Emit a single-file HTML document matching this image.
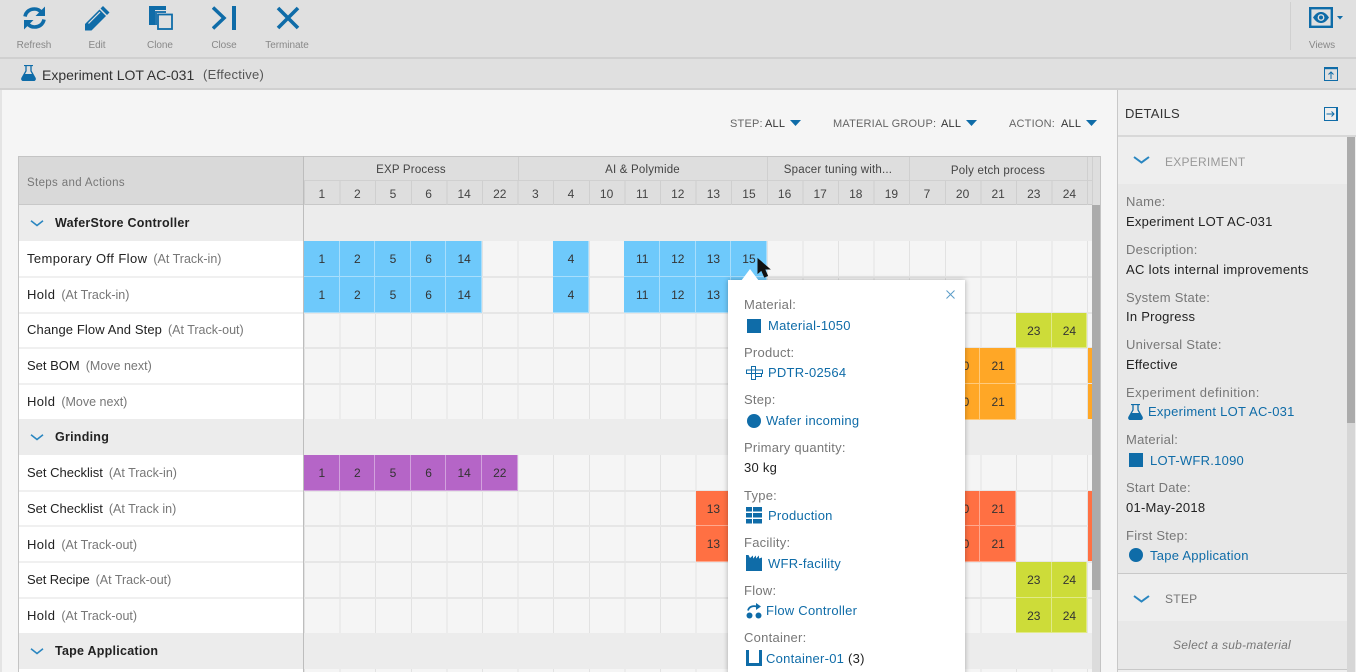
<!DOCTYPE html>
<html><head><meta charset="utf-8"><style>
html,body{margin:0;padding:0;width:1356px;height:672px;overflow:hidden;background:#f5f5f5}
body{font-family:"Liberation Sans",sans-serif;position:relative;color:#333}
.a{position:absolute}
.t{position:absolute;white-space:nowrap;line-height:20px;font-size:13px;letter-spacing:.25px;transform:translateY(1px)}
.g{color:#777}.l{color:#0f6ca8}.d{color:#222}
.tb{font-size:10px;color:#888;letter-spacing:-.05px;text-align:center;width:70px}
.c{position:absolute;width:35.6px;height:35.6px;text-align:center;line-height:36px;font-size:12px;color:#333;box-shadow:inset -1px -1px 0 rgba(255,255,255,.4)}
.bl{background:#6ec9fb}.pu{background:#b565c7}.re{background:#ff7043}.or{background:#ffa726}.li{background:#cddc39}
.x0{left:304px}.x1{left:339.6px}.x2{left:375.2px}.x3{left:410.8px}.x4{left:446.4px}.x5{left:482px}.x7{left:553.2px}.x9{left:624.4px}.x10{left:660px}.x11{left:695.6px}.x12{left:731.2px}.x18{left:944.8px}.x19{left:980.4px}.x20{left:1016px}.x21{left:1051.6px}
.r1{top:241px}.r2{top:277px}.r3{top:312.5px}.r4{top:348px}.r5{top:384px}.r6{top:455px}.r7{top:490.5px}.r8{top:526px}.r9{top:562px}.r10{top:597.5px}
.hn{position:absolute;top:183.5px;width:35.6px;text-align:center;font-size:12px;line-height:20px;color:#444}
.hg{position:absolute;top:160px;text-align:center;font-size:11.5px;line-height:20px;color:#444;letter-spacing:.2px;white-space:nowrap}
.rl{left:27px;font-size:13px;letter-spacing:.1px;color:#222}.rl span{color:#777;margin-left:6px;font-size:12.5px;letter-spacing:0}
.gl{left:55px;font-weight:700;font-size:12.5px;color:#222}
.ex{position:absolute;left:1087.5px;width:4.5px;height:35px}
.f{font-size:11px;letter-spacing:.2px;color:#666}
svg{position:absolute;display:block}
</style></head><body>

<!-- toolbar -->
<div class="a" style="left:0;top:0;width:1356px;height:57px;background:#e0e0e0"></div>
<div class="a" style="left:0;top:57px;width:1356px;height:2px;background:#d0d0d0"></div>
<div class="a" style="left:0;top:59px;width:1356px;height:29px;background:#e0e0e0"></div>
<div class="a" style="left:0;top:88px;width:1356px;height:2px;background:#d0d0d0"></div>
<div class="a" style="left:0;top:90px;width:2px;height:582px;background:#e4e4e4"></div>

<svg style="left:22px;top:5px" width="25" height="26" viewBox="0 0 25 26" fill="none" stroke="#0f6ca8" stroke-width="3.6"><path d="M3 11.500C4 6.500 8 4 12.500 4c3 0 5.500 1.500 7 3.500"/><path d="M22 14.500C21 19.500 17 22 12.500 22c-3 0-5.500-1.500-7-3.500"/><path d="M23 1.500v9.500h-9.500z" fill="#0f6ca8" stroke="none"/><path d="M2 24.500v-9.500h9.500z" fill="#0f6ca8" stroke="none"/></svg>
<svg style="left:85px;top:6px" width="25" height="25" viewBox="0 0 25 25"><path d="M0 24.500V18L14.500 3.500l6.500 6.500L6.500 24.500z" fill="#0f6ca8"/><path d="M15.500 2.500L18 0l6.500 6.500L22 9z" fill="#0f6ca8"/><path d="M3.500 17.500L15 6" stroke="#e0e0e0" stroke-width="1.200"/></svg>
<svg style="left:148px;top:5px" width="26" height="26" viewBox="0 0 26 26"><path d="M1 1h17v4H7v15H1z" fill="#0f6ca8"/><path d="M7 6h11v2H9v12H7z" fill="#0f6ca8" opacity=".9"/><rect x="10" y="9.500" width="14" height="14.500" fill="none" stroke="#0f6ca8" stroke-width="1.800"/></svg>
<svg style="left:212px;top:5px" width="26" height="26" viewBox="0 0 26 26"><path d="M1 2.500L12 13 1 23.500" fill="none" stroke="#0f6ca8" stroke-width="3.500"/><rect x="20" y="1" width="4" height="24" fill="#0f6ca8"/></svg>
<svg style="left:276px;top:6px" width="24" height="24" viewBox="0 0 24 24"><path d="M2 2l20 20M22 2L2 22" stroke="#0f6ca8" stroke-width="3.600" fill="none"/></svg>

<div class="t tb" style="left:-1px;top:35px">Refresh</div>
<div class="t tb" style="left:62px;top:35px">Edit</div>
<div class="t tb" style="left:125px;top:35px">Clone</div>
<div class="t tb" style="left:189px;top:35px">Close</div>
<div class="t tb" style="left:252px;top:35px">Terminate</div>

<div class="a" style="left:1290px;top:2px;width:1px;height:48px;background:#d0d0d0"></div>
<svg style="left:1309px;top:7px" width="35" height="21" viewBox="0 0 35 21"><rect x="1.200" y="1.200" width="21.600" height="18.600" fill="none" stroke="#0f6ca8" stroke-width="2.400"/><path d="M4 10.500C7 6 9.500 5 12 5s5 1 8 5.500C17 15 14.500 16 12 16s-5-1-8-5.500z" fill="#0f6ca8"/><circle cx="12" cy="10.500" r="3.400" fill="#e0e0e0"/><circle cx="12" cy="10.500" r="2" fill="#0f6ca8"/><path d="M28 9h6l-3 3.500z" fill="#0f6ca8"/></svg>
<div class="t tb" style="left:1287px;top:35px">Views</div>

<!-- title -->
<svg style="left:21px;top:65px" width="15" height="16" viewBox="0 0 15 16"><path d="M3 .5h9M5 1v5L1 13c-.6 1.500.2 2.500 1.500 2.500h10c1.300 0 2.100-1 1.500-2.500L10 6V1" fill="none" stroke="#0f6ca8" stroke-width="1.300"/><path d="M3.500 9h8l3 5.500-1 1.200h-12l-1-1.200z" fill="#0f6ca8"/></svg>
<div class="t" style="left:42px;top:64px;font-size:14px;color:#333;letter-spacing:0">Experiment LOT AC-031</div>
<div class="t" style="left:203px;top:64px;font-size:13px;color:#555;letter-spacing:.25px">(Effective)</div>
<svg style="left:1324px;top:67px" width="14" height="14" viewBox="0 0 14 14"><rect x=".5" y=".5" width="13" height="13" fill="none" stroke="#0f6ca8"/><rect x="0" y="0" width="14" height="2.200" fill="#0f6ca8"/><path d="M7 12V5M4.500 7.500L7 5l2.500 2.500" fill="none" stroke="#0f6ca8" stroke-width="1"/></svg>

<!-- filters -->
<div class="t f" style="left:730px;top:113px">STEP:</div>
<div class="t f" style="left:765px;top:113px;color:#333">ALL</div>
<svg style="left:790px;top:120px" width="11" height="6"><path d="M0 0h11L5.500 6z" fill="#0f6ca8"/></svg>
<div class="t f" style="left:833px;top:113px">MATERIAL GROUP:</div>
<div class="t f" style="left:941px;top:113px;color:#333">ALL</div>
<svg style="left:966px;top:120px" width="11" height="6"><path d="M0 0h11L5.500 6z" fill="#0f6ca8"/></svg>
<div class="t f" style="left:1009px;top:113px">ACTION:</div>
<div class="t f" style="left:1061px;top:113px;color:#333">ALL</div>
<svg style="left:1086px;top:120px" width="11" height="6"><path d="M0 0h11L5.500 6z" fill="#0f6ca8"/></svg>

<!-- table frame -->
<div class="a" style="left:18px;top:156px;width:1082px;height:516px;background:#f5f5f5"></div>
<div class="a" style="left:304px;top:205px;width:788px;height:467px;background-image:repeating-linear-gradient(90deg,#e2e2e2 0,#e2e2e2 1px,transparent 1px,transparent 35.6px)"></div>
<div class="a" style="left:304px;top:276px;width:788px;height:1.500px;background:#e6e6e6"></div>
<div class="a" style="left:304px;top:312px;width:788px;height:1.500px;background:#e6e6e6"></div>
<div class="a" style="left:304px;top:347px;width:788px;height:1.500px;background:#e6e6e6"></div>
<div class="a" style="left:304px;top:383px;width:788px;height:1.500px;background:#e6e6e6"></div>
<div class="a" style="left:304px;top:490px;width:788px;height:1.500px;background:#e6e6e6"></div>
<div class="a" style="left:304px;top:525px;width:788px;height:1.500px;background:#e6e6e6"></div>
<div class="a" style="left:304px;top:561px;width:788px;height:1.500px;background:#e6e6e6"></div>
<div class="a" style="left:304px;top:597px;width:788px;height:1.500px;background:#e6e6e6"></div>

<!-- header -->
<div class="a" style="left:18px;top:156px;width:1082px;height:49px;background:#dedede;border-top:1px solid #c4c4c4;box-sizing:border-box"></div>
<div class="a" style="left:18px;top:156px;width:286px;height:49px;background:#d9d9d9;border-top:1px solid #c4c4c4;box-sizing:border-box"></div>
<div class="a" style="left:18px;top:204px;width:1074px;height:1px;background:#c8c8c8"></div>
<div class="a" style="left:304px;top:180px;width:788px;height:1px;background:#d0d0d0"></div>
<div class="a" style="left:304px;top:181px;width:788px;height:24px;background-image:repeating-linear-gradient(90deg,#cfcfcf 0,#cfcfcf 1px,transparent 1px,transparent 35.6px)"></div>
<div class="a" style="left:518px;top:157px;width:1px;height:24px;background:#cfcfcf"></div>
<div class="a" style="left:767px;top:157px;width:1px;height:24px;background:#cfcfcf"></div>
<div class="a" style="left:909px;top:157px;width:1px;height:24px;background:#cfcfcf"></div>
<div class="a" style="left:1087px;top:157px;width:1px;height:48px;background:#cfcfcf"></div>
<div class="a" style="left:1092px;top:157px;width:1px;height:48px;background:#cfcfcf"></div>
<div class="t g" style="left:27px;top:172px;font-size:11.5px;letter-spacing:.35px">Steps and Actions</div>
<div class="hg" style="left:304px;width:214px">EXP Process</div>
<div class="hg" style="left:518px;width:249px">AI &amp; Polymide</div>
<div class="hg" style="left:767px;width:142px">Spacer tuning with...</div>
<div class="hg" style="left:909px;width:178px;top:161px">Poly etch process</div>

<div class="hn" style="left:304px">1</div><div class="hn" style="left:339.6px">2</div><div class="hn" style="left:375.2px">5</div><div class="hn" style="left:410.8px">6</div><div class="hn" style="left:446.4px">14</div><div class="hn" style="left:482px">22</div><div class="hn" style="left:517.6px">3</div><div class="hn" style="left:553.2px">4</div><div class="hn" style="left:588.8px">10</div><div class="hn" style="left:624.4px">11</div><div class="hn" style="left:660px">12</div><div class="hn" style="left:695.6px">13</div><div class="hn" style="left:731.2px">15</div><div class="hn" style="left:766.8px">16</div><div class="hn" style="left:802.4px">17</div><div class="hn" style="left:838px">18</div><div class="hn" style="left:873.6px">19</div><div class="hn" style="left:909.2px">7</div><div class="hn" style="left:944.8px">20</div><div class="hn" style="left:980.4px">21</div><div class="hn" style="left:1016px">23</div><div class="hn" style="left:1051.6px">24</div>

<!-- group rows -->
<div class="a" style="left:18px;top:205px;width:1074px;height:36px;background:#ececec"></div>
<div class="a" style="left:18px;top:419px;width:1074px;height:36px;background:#ececec"></div>
<div class="a" style="left:18px;top:633px;width:1074px;height:36px;background:#ececec"></div>

<!-- white left rows -->
<div class="a" style="left:19px;top:241px;width:285px;height:178px;background:#fff"></div>
<div class="a" style="left:19px;top:455px;width:285px;height:178px;background:#fff"></div>
<div class="a" style="left:19px;top:669px;width:285px;height:3px;background:#fff"></div>
<div class="a" style="left:19px;top:276px;width:285px;height:1.500px;background:#f0f0f0"></div>
<div class="a" style="left:19px;top:312px;width:285px;height:1.500px;background:#f0f0f0"></div>
<div class="a" style="left:19px;top:347px;width:285px;height:1.500px;background:#f0f0f0"></div>
<div class="a" style="left:19px;top:383px;width:285px;height:1.500px;background:#f0f0f0"></div>
<div class="a" style="left:19px;top:490px;width:285px;height:1.500px;background:#f0f0f0"></div>
<div class="a" style="left:19px;top:525px;width:285px;height:1.500px;background:#f0f0f0"></div>
<div class="a" style="left:19px;top:561px;width:285px;height:1.500px;background:#f0f0f0"></div>
<div class="a" style="left:19px;top:597px;width:285px;height:1.500px;background:#f0f0f0"></div>
<div class="a" style="left:18px;top:156px;width:1px;height:516px;background:#c4c4c4"></div>
<div class="a" style="left:303px;top:156px;width:1px;height:516px;background:#bdbdbd"></div>

<!-- labels -->
<svg style="left:30px;top:220px" width="14" height="7"><path d="M1 .8L7 5.500 13 .8" fill="none" stroke="#2a86c0" stroke-width="1.600"/></svg>
<div class="t gl" style="top:212px">WaferStore Controller</div>
<svg style="left:30px;top:434px" width="14" height="7"><path d="M1 .8L7 5.500 13 .8" fill="none" stroke="#2a86c0" stroke-width="1.600"/></svg>
<div class="t gl" style="top:426px">Grinding</div>
<svg style="left:30px;top:648px" width="14" height="7"><path d="M1 .8L7 5.500 13 .8" fill="none" stroke="#2a86c0" stroke-width="1.600"/></svg>
<div class="t gl" style="top:640px">Tape Application</div>

<div class="t rl" style="top:248px;letter-spacing:.4px">Temporary Off Flow<span>(At Track-in)</span></div>
<div class="t rl" style="top:284px;letter-spacing:.4px">Hold<span>(At Track-in)</span></div>
<div class="t rl" style="top:319px">Change Flow And Step<span>(At Track-out)</span></div>
<div class="t rl" style="top:355px;letter-spacing:0">Set BOM<span>(Move next)</span></div>
<div class="t rl" style="top:391px;letter-spacing:.4px">Hold<span>(Move next)</span></div>
<div class="t rl" style="top:462px;letter-spacing:0">Set Checklist<span>(At Track-in)</span></div>
<div class="t rl" style="top:498px;letter-spacing:0">Set Checklist<span>(At Track in)</span></div>
<div class="t rl" style="top:534px;letter-spacing:.4px">Hold<span>(At Track-out)</span></div>
<div class="t rl" style="top:569px;letter-spacing:-.1px">Set Recipe<span>(At Track-out)</span></div>
<div class="t rl" style="top:605px;letter-spacing:.4px">Hold<span>(At Track-out)</span></div>

<!-- cells -->
<div class="c bl x0 r1">1</div><div class="c bl x1 r1">2</div><div class="c bl x2 r1">5</div><div class="c bl x3 r1">6</div><div class="c bl x4 r1">14</div><div class="c bl x7 r1">4</div><div class="c bl x9 r1">11</div><div class="c bl x10 r1">12</div><div class="c bl x11 r1">13</div><div class="c bl x12 r1">15</div>
<div class="c bl x0 r2">1</div><div class="c bl x1 r2">2</div><div class="c bl x2 r2">5</div><div class="c bl x3 r2">6</div><div class="c bl x4 r2">14</div><div class="c bl x7 r2">4</div><div class="c bl x9 r2">11</div><div class="c bl x10 r2">12</div><div class="c bl x11 r2">13</div><div class="c bl x12 r2"></div>
<div class="c li x20 r3">23</div><div class="c li x21 r3">24</div>
<div class="c or x18 r4">20</div><div class="c or x19 r4">21</div><div class="ex or r4"></div>
<div class="c or x18 r5">20</div><div class="c or x19 r5">21</div><div class="ex or r5"></div>
<div class="c pu x0 r6">1</div><div class="c pu x1 r6">2</div><div class="c pu x2 r6">5</div><div class="c pu x3 r6">6</div><div class="c pu x4 r6">14</div><div class="c pu x5 r6">22</div>
<div class="c re x11 r7">13</div><div class="c re x12 r7"></div><div class="c re x18 r7">20</div><div class="c re x19 r7">21</div><div class="ex re r7"></div>
<div class="c re x11 r8">13</div><div class="c re x12 r8"></div><div class="c re x18 r8">20</div><div class="c re x19 r8">21</div><div class="ex re r8"></div>
<div class="c li x20 r9">23</div><div class="c li x21 r9">24</div>
<div class="c li x20 r10">23</div><div class="c li x21 r10">24</div>

<!-- table scrollbar -->
<div class="a" style="left:1092px;top:205px;width:8px;height:385px;background:#ababab"></div>
<div class="a" style="left:1092px;top:590px;width:8px;height:82px;background:#dcdcdc"></div>
<div class="a" style="left:1100px;top:156px;width:1px;height:516px;background:#c4c4c4"></div>

<!-- popup -->
<div class="a" style="left:728px;top:280px;width:237px;height:400px;background:#fff;box-shadow:0 0 5px rgba(0,0,0,.3)"></div>
<svg style="left:741px;top:268px" width="18" height="13"><path d="M0 13L9 1l9 12z" fill="#fff"/></svg>
<svg style="left:757px;top:258px" width="15" height="21" viewBox="0 0 15 21"><path d="M1 1v14l3.500-3 3 7 3-1.300-3-6.700h5z" fill="#111" stroke="#111" stroke-width="1"/></svg>
<svg style="left:946px;top:290px" width="9" height="9"><path d="M.5.500l8 8M8.500.500l-8 8" stroke="#5b9cc8" stroke-width="1"/></svg>

<div class="t g" style="left:744px;top:294px">Material:</div>
<svg style="left:747px;top:319px" width="14" height="14"><rect width="14" height="14" fill="#0f6ca8"/></svg>
<div class="t l" style="left:768px;top:315px">Material-1050</div>
<div class="t g" style="left:744px;top:342px">Product:</div>
<svg style="left:746px;top:366px" width="17" height="14" viewBox="0 0 17 14" fill="none" stroke="#0f6ca8" stroke-width="1"><rect x="5.500" y=".5" width="4" height="13"/><rect x=".5" y="4" width="16" height="3.500"/><rect x="9.500" y="7.500" width="6" height="3"/></svg>
<div class="t l" style="left:768px;top:362px">PDTR-02564</div>
<div class="t g" style="left:744px;top:389px">Step:</div>
<svg style="left:747px;top:414px" width="14" height="14"><circle cx="7" cy="7" r="7" fill="#0f6ca8"/></svg>
<div class="t l" style="left:766px;top:410px">Wafer incoming</div>
<div class="t g" style="left:744px;top:437px">Primary quantity:</div>
<div class="t d" style="left:744px;top:457px">30 kg</div>
<div class="t g" style="left:744px;top:485px">Type:</div>
<svg style="left:746px;top:507px" width="16" height="17" viewBox="0 0 16 17" fill="#0f6ca8"><rect width="6" height="4.500"/><rect x="7" width="9" height="4.500"/><rect y="6" width="6" height="4.500"/><rect x="7" y="6" width="9" height="4.500"/><rect y="12" width="6" height="4.500"/><rect x="7" y="12" width="9" height="4.500"/></svg>
<div class="t l" style="left:768px;top:505px">Production</div>
<div class="t g" style="left:744px;top:532px">Facility:</div>
<svg style="left:746px;top:555px" width="16" height="16" viewBox="0 0 16 16"><path d="M0 0h2.500l1.500 3 3-2.500v3l3-3v3l3-3v3l3-1V16H0z" fill="#0f6ca8"/></svg>
<div class="t l" style="left:768px;top:553px">WFR-facility</div>
<div class="t g" style="left:744px;top:580px">Flow:</div>
<svg style="left:746px;top:603px" width="16" height="16" viewBox="0 0 16 16"><circle cx="3.500" cy="12.500" r="3" fill="#0f6ca8"/><circle cx="12.500" cy="12.500" r="3" fill="#0f6ca8"/><path d="M2 7.500C3 3.500 7 2.500 11 3.500" fill="none" stroke="#0f6ca8" stroke-width="1.800"/><path d="M10 0l5 3.500-5 3.500z" fill="#0f6ca8"/></svg>
<div class="t l" style="left:766px;top:600px">Flow Controller</div>
<div class="t g" style="left:744px;top:627px">Container:</div>
<svg style="left:746px;top:650px" width="16" height="16" viewBox="0 0 16 16"><path d="M0 0h3v13h10V0h3v16H0z" fill="#0f6ca8"/></svg>
<div class="t" style="left:766px;top:648px"><span class="l">Container-01</span> <span class="d">(3)</span></div>

<!-- details panel -->
<div class="a" style="left:1117px;top:90px;width:239px;height:582px;background:#eee;border-left:1px solid #c8c8c8;box-sizing:border-box"></div>
<div class="a" style="left:1118px;top:135px;width:238px;height:2px;background:#d8d8d8"></div>
<div class="t" style="left:1125px;top:103px;font-size:13px;color:#333">DETAILS</div>
<svg style="left:1324px;top:107px" width="14" height="14" viewBox="0 0 14 14"><rect x=".5" y=".5" width="13" height="13" fill="none" stroke="#0f6ca8"/><rect x="12" y="0" width="2" height="14" fill="#0f6ca8"/><path d="M2.500 7H10M7.500 4.500L10 7 7.500 9.500" fill="none" stroke="#0f6ca8" stroke-width="1"/></svg>

<div class="a" style="left:1118px;top:184px;width:229px;height:389px;background:#e8e8e8"></div>
<svg style="left:1133px;top:156px" width="17" height="8"><path d="M1 1l7.500 5.500L16 1" fill="none" stroke="#2a86c0" stroke-width="2"/></svg>
<div class="t" style="left:1165px;top:151px;font-size:12px;color:#999">EXPERIMENT</div>

<div class="t g" style="left:1126px;top:191px">Name:</div>
<div class="t d" style="left:1126px;top:211px">Experiment LOT AC-031</div>
<div class="t g" style="left:1126px;top:239px">Description:</div>
<div class="t d" style="left:1126px;top:259px;letter-spacing:.32px">AC lots internal improvements</div>
<div class="t g" style="left:1126px;top:287px">System State:</div>
<div class="t d" style="left:1126px;top:306px">In Progress</div>
<div class="t g" style="left:1126px;top:334px">Universal State:</div>
<div class="t d" style="left:1126px;top:354px">Effective</div>
<div class="t g" style="left:1126px;top:382px;letter-spacing:.4px">Experiment definition:</div>
<svg style="left:1128px;top:404px" width="15" height="16" viewBox="0 0 15 16"><path d="M3 .5h9M5 1v5L1 13c-.6 1.500.2 2.500 1.500 2.500h10c1.300 0 2.100-1 1.500-2.500L10 6V1" fill="none" stroke="#0f6ca8" stroke-width="1.300"/><path d="M3.500 9h8l3 5.500-1 1.200h-12l-1-1.200z" fill="#0f6ca8"/></svg>
<div class="t l" style="left:1148px;top:401px">Experiment LOT AC-031</div>
<div class="t g" style="left:1126px;top:429px">Material:</div>
<svg style="left:1129px;top:453px" width="14" height="14"><rect width="14" height="14" fill="#0f6ca8"/></svg>
<div class="t l" style="left:1150px;top:450px">LOT-WFR.1090</div>
<div class="t g" style="left:1126px;top:477px">Start Date:</div>
<div class="t d" style="left:1126px;top:497px">01-May-2018</div>
<div class="t g" style="left:1126px;top:525px">First Step:</div>
<svg style="left:1129px;top:548px" width="14" height="14"><circle cx="7" cy="7" r="7" fill="#0f6ca8"/></svg>
<div class="t l" style="left:1150px;top:545px">Tape Application</div>

<div class="a" style="left:1118px;top:573px;width:229px;height:1px;background:#c8c8c8"></div>
<svg style="left:1133px;top:595px" width="17" height="8"><path d="M1 1l7.500 5.500L16 1" fill="none" stroke="#2a86c0" stroke-width="2"/></svg>
<div class="t" style="left:1165px;top:588px;font-size:12px;color:#777">STEP</div>
<div class="a" style="left:1118px;top:621px;width:229px;height:48px;background:#e8e8e8"></div>
<div class="t" style="left:1173px;top:634px;font-size:12px;color:#777;font-style:italic">Select a sub-material</div>
<div class="a" style="left:1118px;top:669px;width:229px;height:1px;background:#c8c8c8"></div>

<div class="a" style="left:1347px;top:137px;width:8px;height:535px;background:#d6d6d6"></div>
<div class="a" style="left:1347px;top:137px;width:8px;height:286px;background:#ababab"></div>
</body></html>
